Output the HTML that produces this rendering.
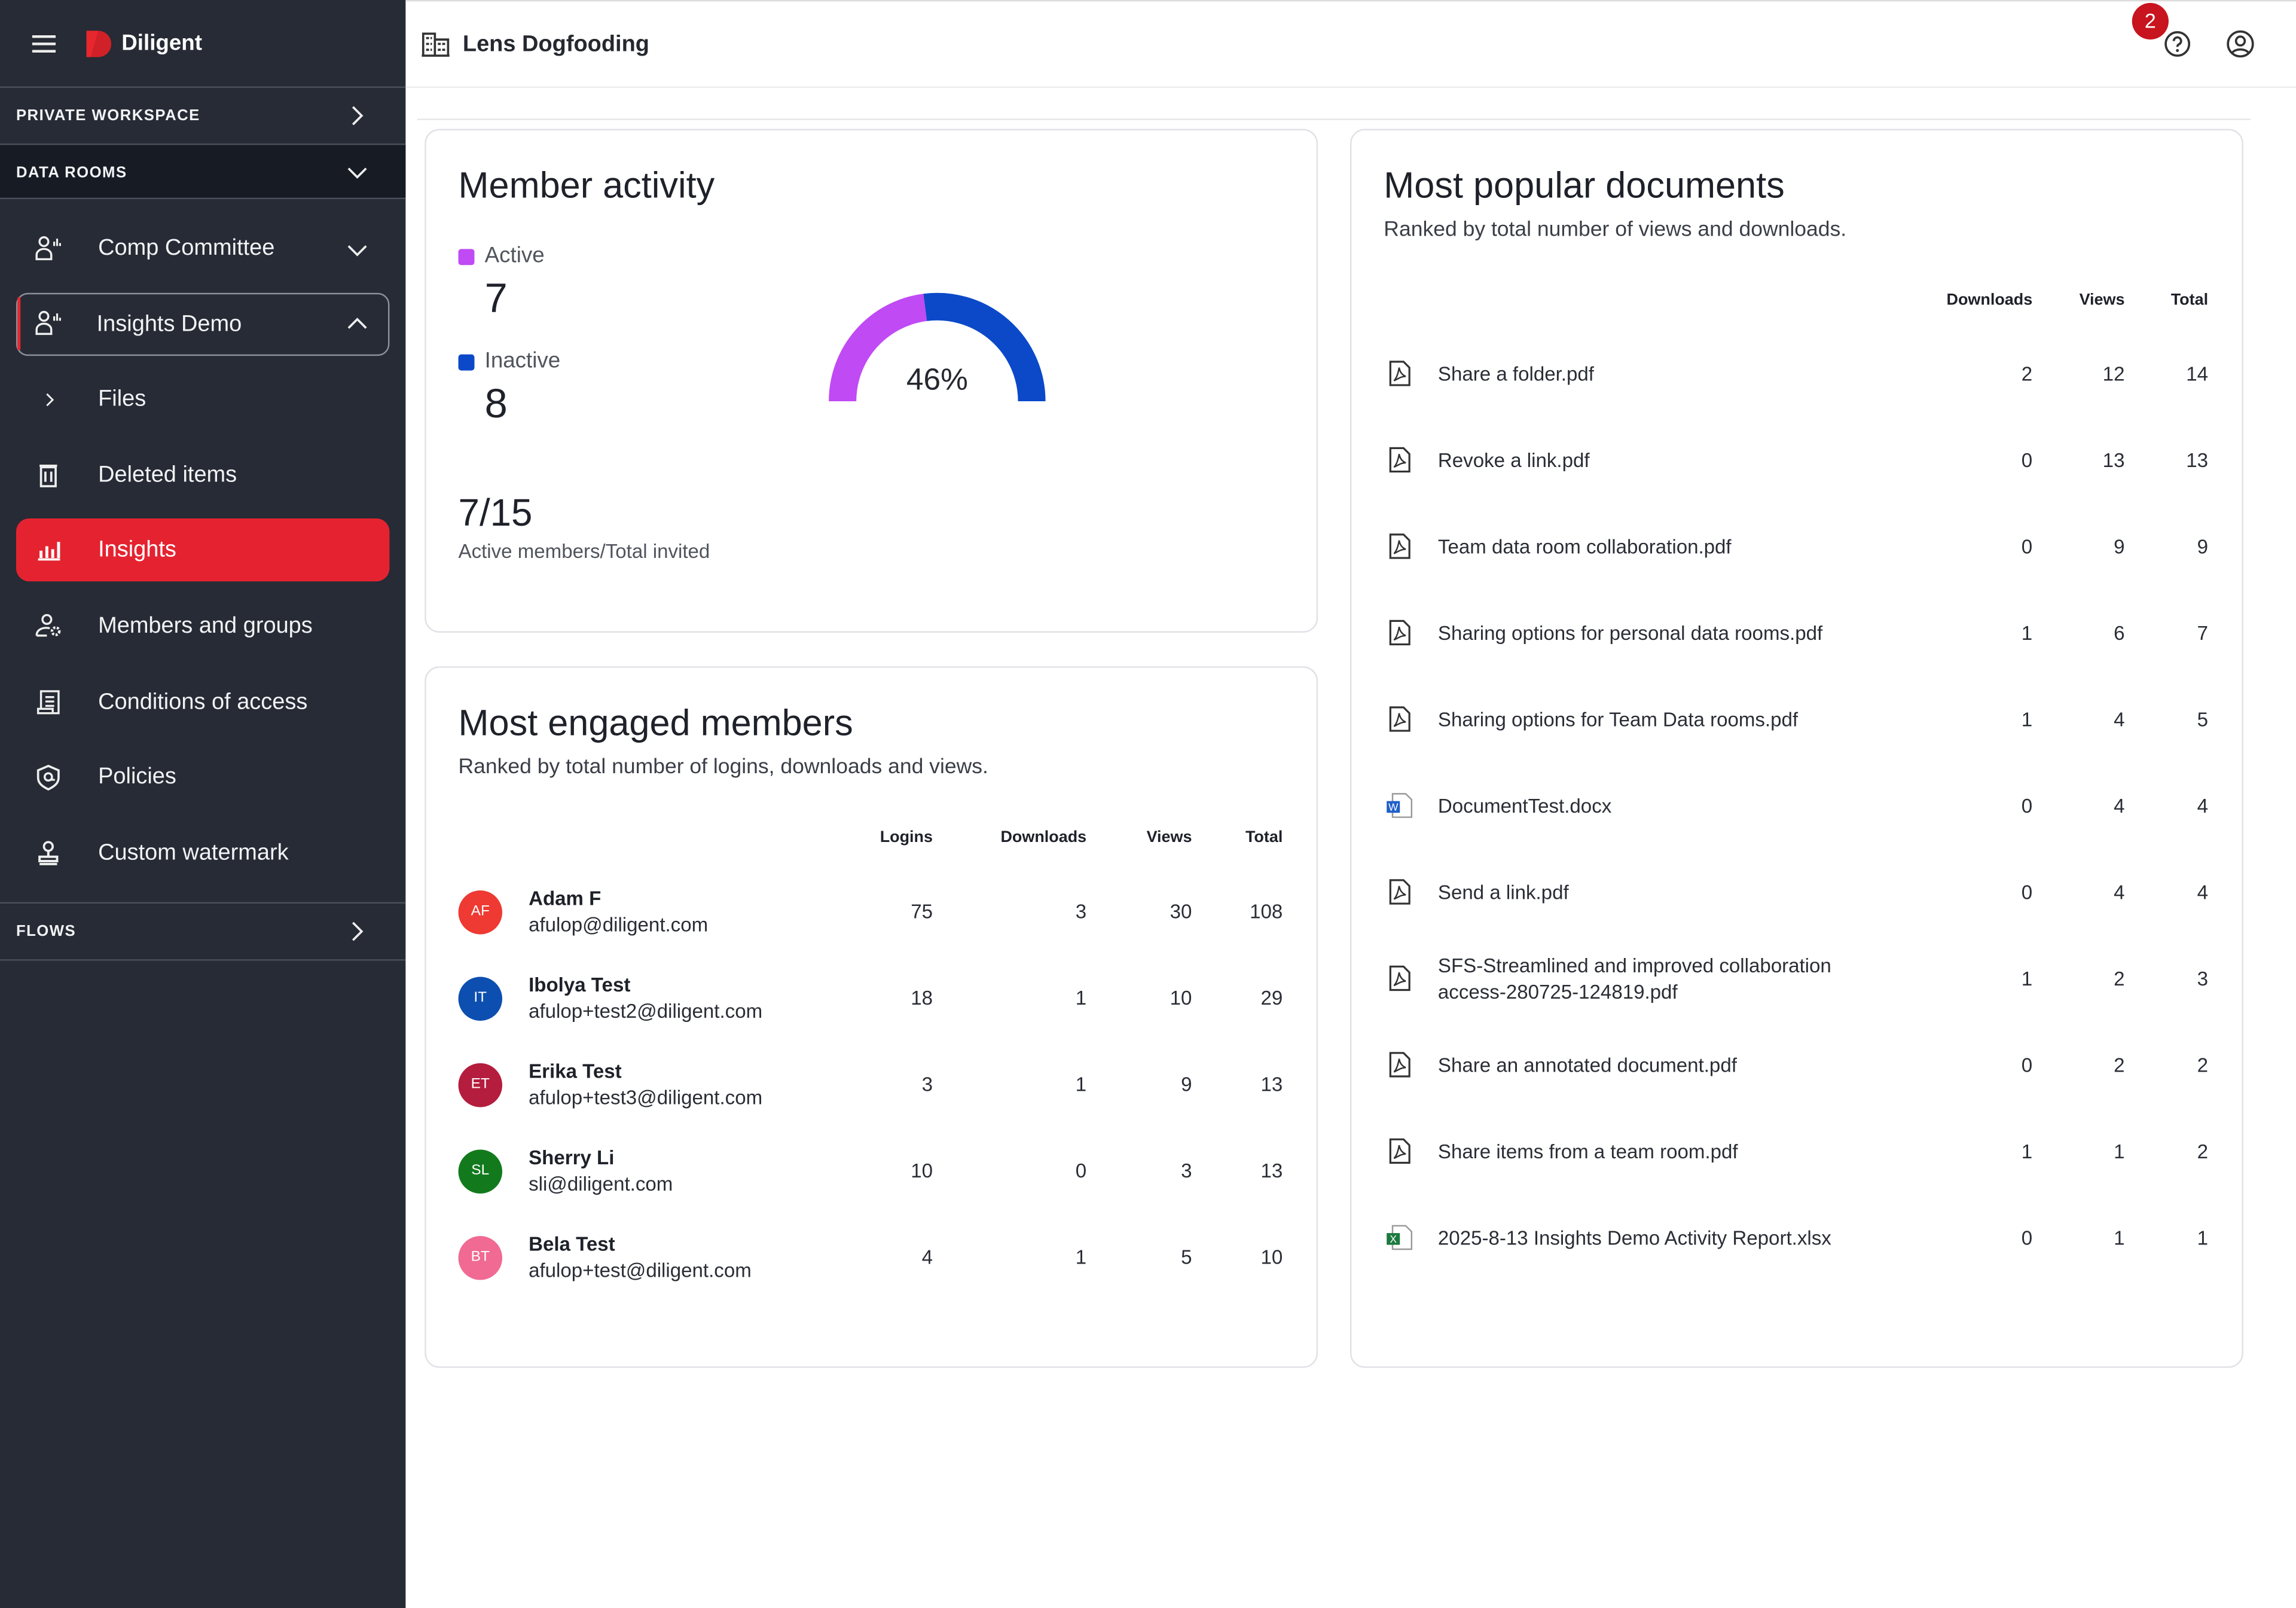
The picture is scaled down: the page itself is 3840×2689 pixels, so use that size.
<!DOCTYPE html>
<html><head><meta charset="utf-8"><style>
*{margin:0;padding:0;box-sizing:border-box}
html,body{width:3840px;height:2688px;overflow:hidden;background:#fff}
#w{position:absolute;left:0;top:0;width:1568px;height:1098px;transform:scale(2.449);transform-origin:0 0;font-family:"Liberation Sans",sans-serif;color:#1e2129}
.a{position:absolute;white-space:nowrap}
.sb{position:absolute;left:0;top:0;width:277px;height:1098px;background:#262b35}
.si{position:absolute;left:67px;color:#f2f3f5;font-size:15.5px;line-height:20px}
.ic{position:absolute;left:23px;width:20px;height:20px}
.hd{position:absolute;left:11px;color:#f2f3f5;font-size:10.5px;font-weight:bold;letter-spacing:.6px;line-height:14px}
.card{position:absolute;border:1px solid #e0e2e6;border-radius:10px;background:#fff}
.t{font-size:25px;color:#1e2129;line-height:30px}
.sub{font-size:14.5px;color:#3a3e47;line-height:18px}
.th{font-size:11px;font-weight:bold;color:#1e2129;line-height:14px}
.r{text-align:right}
.n{font-size:13.5px;color:#2a2d35;line-height:16px}
.av{position:absolute;left:313px;width:30px;height:30px;border-radius:50%;color:#fff;font-size:10px;text-align:center;line-height:30px}
.nm{font-size:13.5px;font-weight:bold;color:#1e2129;line-height:16px}
.em{font-size:13.5px;color:#2a2d35;line-height:16px}
.doc{position:absolute;left:982px;font-size:13.5px;color:#2a2d35;line-height:18px}
</style></head><body><div id="w">
<div class="sb"></div>
<!-- sidebar header -->
<svg class="a" style="left:21px;top:23px" width="18" height="14"><path d="M1 2h16M1 7h16M1 12h16" stroke="#eee" stroke-width="1.8"/></svg>
<svg class="a" style="left:58px;top:19px" width="20" height="22"><path d="M1 2h8a9 9 0 0 1 0 18H1z" fill="#e8262e"/><path d="M9 2a9 9 0 0 1 0 18L4 20z" fill="#b71c22" opacity=".5"/></svg>
<div class="a" style="left:83px;top:20px;color:#fff;font-size:15px;font-weight:bold;line-height:20px">Diligent</div>
<div class="a" style="left:0;top:59px;width:277px;height:1px;background:#4a505c"></div>
<div class="hd" style="top:72px">PRIVATE WORKSPACE</div>
<svg class="a" style="left:239px;top:72px" width="10" height="14"><path d="M2 1l6 6-6 6" stroke="#eee" stroke-width="1.5" fill="none"/></svg>
<div class="a" style="left:0;top:98px;width:277px;height:38px;background:#161b24;border-top:1px solid #4a505c;border-bottom:1px solid #4a505c"></div>
<div class="hd" style="top:111px">DATA ROOMS</div>
<svg class="a" style="left:237px;top:113px" width="14" height="10"><path d="M1 2l6 6 6-6" stroke="#eee" stroke-width="1.5" fill="none"/></svg>
<!-- items -->
<svg class="ic" style="top:160px" viewBox="0 0 20 20"><circle cx="7" cy="5" r="3" stroke="#eee" stroke-width="1.4" fill="none"/><path d="M2 17v-3a5 4 0 0 1 10 0v3z" stroke="#eee" stroke-width="1.4" fill="none"/><path d="M14 5v3M16 3v5M18 6v2" stroke="#eee" stroke-width="1.3"/></svg>
<div class="si" style="top:160px">Comp Committee</div>
<svg class="a" style="left:237px;top:166px" width="14" height="10"><path d="M1 2l6 6 6-6" stroke="#eee" stroke-width="1.5" fill="none"/></svg>
<div class="a" style="left:11px;top:200px;width:255px;height:43px;border:1px solid #8a909c;border-radius:8px"></div>
<div class="a" style="left:12px;top:203px;width:2px;height:36px;background:#e8262e"></div>
<svg class="ic" style="top:211px" viewBox="0 0 20 20"><circle cx="7" cy="5" r="3" stroke="#eee" stroke-width="1.4" fill="none"/><path d="M2 17v-3a5 4 0 0 1 10 0v3z" stroke="#eee" stroke-width="1.4" fill="none"/><path d="M14 5v3M16 3v5M18 6v2" stroke="#eee" stroke-width="1.3"/></svg>
<div class="si" style="top:212px;left:66px">Insights Demo</div>
<svg class="a" style="left:237px;top:216px" width="14" height="10"><path d="M1 8l6-6 6 6" stroke="#eee" stroke-width="1.5" fill="none"/></svg>
<svg class="a" style="left:30px;top:268px" width="8" height="10"><path d="M2 1l4 4-4 4" stroke="#eee" stroke-width="1.2" fill="none"/></svg>
<div class="si" style="top:263px">Files</div>
<svg class="ic" style="top:315px" viewBox="0 0 20 20"><path d="M4 3h12M5 4h10v13H5zM8 7v7M12 7v7" stroke="#eee" stroke-width="1.5" fill="none"/></svg>
<div class="si" style="top:315px">Deleted items</div>
<div class="a" style="left:11px;top:354px;width:255px;height:43px;background:#e52330;border-radius:9px"></div>
<svg class="ic" style="top:366px" viewBox="0 0 20 20"><path d="M3 16h15" stroke="#fff" stroke-width="1.5"/><path d="M4 10h2v5H4zM8 7h2v8H8zM12 9h2v6h-2zM16 4h2v11h-2z" fill="#fff"/></svg>
<div class="si" style="top:366px;color:#fff">Insights</div>
<svg class="ic" style="top:418px" viewBox="0 0 20 20"><circle cx="9" cy="5" r="3" stroke="#eee" stroke-width="1.4" fill="none"/><path d="M2 16c0-4 4-6 9-5M2 16h7" stroke="#eee" stroke-width="1.4" fill="none"/><circle cx="15" cy="13" r="2.5" stroke="#eee" stroke-width="1.8" fill="none" stroke-dasharray="1.5 1"/></svg>
<div class="si" style="top:418px">Members and groups</div>
<svg class="ic" style="top:470px" viewBox="0 0 20 20"><path d="M5 14V2h12v15H3v-3h10v3M8 6h6M8 9h6M8 12h6" stroke="#eee" stroke-width="1.4" fill="none"/></svg>
<div class="si" style="top:470px">Conditions of access</div>
<svg class="ic" style="top:521px" viewBox="0 0 20 20"><path d="M10 2l7 3v5c0 4-3 6-7 8-4-2-7-4-7-8V5z" stroke="#eee" stroke-width="1.5" fill="none"/><circle cx="10" cy="9.5" r="2.5" stroke="#eee" stroke-width="1.4" fill="none"/><path d="M12.5 9.5v2h2" stroke="#eee" stroke-width="1.3" fill="none"/></svg>
<div class="si" style="top:521px">Policies</div>
<svg class="ic" style="top:573px" viewBox="0 0 20 20"><circle cx="10" cy="5" r="3" stroke="#eee" stroke-width="1.5" fill="none"/><path d="M10 8v4M4 12h12v3H4zM4 17h12" stroke="#eee" stroke-width="1.6" fill="none"/></svg>
<div class="si" style="top:573px">Custom watermark</div>
<div class="a" style="left:0;top:616px;width:277px;height:1px;background:#4a505c"></div>
<div class="hd" style="top:629px">FLOWS</div>
<svg class="a" style="left:239px;top:629px" width="10" height="14"><path d="M2 1l6 6-6 6" stroke="#eee" stroke-width="1.5" fill="none"/></svg>
<div class="a" style="left:0;top:655px;width:277px;height:1px;background:#4a505c"></div>

<!-- top bar -->
<div class="a" style="left:277px;top:0;width:1291px;height:1px;background:#ddd"></div>
<svg class="a" style="left:288px;top:22px" width="19" height="17" viewBox="0 0 19 17"><path d="M1 16V1h8v15M9 5h9v11M0 16h19" stroke="#333" stroke-width="1.5" fill="none"/><path d="M3 4h2M6 4h1M3 8h2M6 8h1M3 12h2M6 12h1M11 8h2M14 8h2M11 12h2M14 12h2" stroke="#333" stroke-width="1.5"/></svg>
<div class="a" style="left:316px;top:21px;font-size:15.5px;font-weight:bold;color:#25282f;line-height:20px">Lens Dogfooding</div>
<svg class="a" style="left:1477px;top:20px" width="20" height="20"><circle cx="10" cy="10" r="8" stroke="#333" stroke-width="1.5" fill="none"/><path d="M7.5 8a2.5 2.5 0 1 1 3.5 2.3c-.8.4-1 .9-1 1.7" stroke="#333" stroke-width="1.5" fill="none"/><circle cx="10" cy="14.5" r="1" fill="#333"/></svg>
<div class="a" style="left:1456px;top:2px;width:25px;height:25px;border-radius:50%;background:#c8141e;color:#fff;font-size:14px;text-align:center;line-height:25px">2</div>
<svg class="a" style="left:1520px;top:20px" width="20" height="20"><circle cx="10" cy="10" r="8.5" stroke="#333" stroke-width="1.5" fill="none"/><circle cx="10" cy="8" r="3" stroke="#333" stroke-width="1.5" fill="none"/><path d="M4.5 16c2-3 9-3 11 0" stroke="#333" stroke-width="1.5" fill="none"/></svg>
<div class="a" style="left:277px;top:59px;width:1291px;height:1px;background:#ececec"></div>
<div class="a" style="left:285px;top:81px;width:1252px;height:1px;background:#e6e6e6"></div>

<!-- card 1 -->
<div class="card" style="left:290px;top:88px;width:610px;height:344px"></div>
<div class="a t" style="left:313px;top:112px">Member activity</div>
<div class="a" style="left:313px;top:170px;width:11px;height:11px;background:#c04af4;border-radius:2px"></div>
<div class="a" style="left:331px;top:166px;font-size:15px;color:#50545c;line-height:18px">Active</div>
<div class="a" style="left:331px;top:188px;font-size:28px;color:#1e2129;line-height:32px">7</div>
<div class="a" style="left:313px;top:242px;width:11px;height:11px;background:#0b49c9;border-radius:2px"></div>
<div class="a" style="left:331px;top:238px;font-size:15px;color:#50545c;line-height:18px">Inactive</div>
<div class="a" style="left:331px;top:260px;font-size:28px;color:#1e2129;line-height:32px">8</div>
<svg class="a" style="left:560px;top:195px" width="160" height="85" viewBox="560 195 160 85"><path d="M575.4 274A64.6 64.6 0 0 1 631.8 209.9" stroke="#c04af4" stroke-width="18.8" fill="none"/><path d="M631.8 209.9A64.6 64.6 0 0 1 704.6 274" stroke="#0b49c9" stroke-width="18.8" fill="none"/></svg>
<div class="a" style="left:600px;top:248px;width:80px;text-align:center;font-size:21px;color:#25282f;line-height:24px">46%</div>
<div class="a" style="left:313px;top:335px;font-size:26px;color:#1e2129;line-height:30px">7/15</div>
<div class="a" style="left:313px;top:369px;font-size:13.5px;color:#50545c;line-height:16px">Active members/Total invited</div>

<!-- card 2 -->
<div class="card" style="left:290px;top:455px;width:610px;height:479px"></div>
<div class="a t" style="left:313px;top:479px">Most engaged members</div>
<div class="a sub" style="left:313px;top:515px">Ranked by total number of logins, downloads and views.</div>
<div class="a th r" style="left:537px;top:565px;width:100px">Logins</div>
<div class="a th r" style="left:642px;top:565px;width:100px">Downloads</div>
<div class="a th r" style="left:714px;top:565px;width:100px">Views</div>
<div class="a th r" style="left:776px;top:565px;width:100px">Total</div>

<div class="av" style="top:608px;background:#ee3a32">AF</div>
<div class="a nm" style="left:361px;top:606px">Adam F</div><div class="a em" style="left:361px;top:624px">afulop@diligent.com</div>
<div class="a n r" style="left:537px;top:615px;width:100px">75</div><div class="a n r" style="left:642px;top:615px;width:100px">3</div><div class="a n r" style="left:714px;top:615px;width:100px">30</div><div class="a n r" style="left:776px;top:615px;width:100px">108</div>

<div class="av" style="top:667px;background:#0d4fb0">IT</div>
<div class="a nm" style="left:361px;top:665px">Ibolya Test</div><div class="a em" style="left:361px;top:683px">afulop+test2@diligent.com</div>
<div class="a n r" style="left:537px;top:674px;width:100px">18</div><div class="a n r" style="left:642px;top:674px;width:100px">1</div><div class="a n r" style="left:714px;top:674px;width:100px">10</div><div class="a n r" style="left:776px;top:674px;width:100px">29</div>

<div class="av" style="top:726px;background:#b41d3d">ET</div>
<div class="a nm" style="left:361px;top:724px">Erika Test</div><div class="a em" style="left:361px;top:742px">afulop+test3@diligent.com</div>
<div class="a n r" style="left:537px;top:733px;width:100px">3</div><div class="a n r" style="left:642px;top:733px;width:100px">1</div><div class="a n r" style="left:714px;top:733px;width:100px">9</div><div class="a n r" style="left:776px;top:733px;width:100px">13</div>

<div class="av" style="top:785px;background:#127a1c">SL</div>
<div class="a nm" style="left:361px;top:783px">Sherry Li</div><div class="a em" style="left:361px;top:801px">sli@diligent.com</div>
<div class="a n r" style="left:537px;top:792px;width:100px">10</div><div class="a n r" style="left:642px;top:792px;width:100px">0</div><div class="a n r" style="left:714px;top:792px;width:100px">3</div><div class="a n r" style="left:776px;top:792px;width:100px">13</div>

<div class="av" style="top:844px;background:#f06a93">BT</div>
<div class="a nm" style="left:361px;top:842px">Bela Test</div><div class="a em" style="left:361px;top:860px">afulop+test@diligent.com</div>
<div class="a n r" style="left:537px;top:851px;width:100px">4</div><div class="a n r" style="left:642px;top:851px;width:100px">1</div><div class="a n r" style="left:714px;top:851px;width:100px">5</div><div class="a n r" style="left:776px;top:851px;width:100px">10</div>

<!-- card 3 -->
<div class="card" style="left:922px;top:88px;width:610px;height:846px"></div>
<div class="a t" style="left:945px;top:112px">Most popular documents</div>
<div class="a sub" style="left:945px;top:148px">Ranked by total number of views and downloads.</div>
<div class="a th r" style="left:1288px;top:198px;width:100px">Downloads</div>
<div class="a th r" style="left:1351px;top:198px;width:100px">Views</div>
<div class="a th r" style="left:1408px;top:198px;width:100px">Total</div>
<svg width="0" height="0" style="position:absolute"><defs>
<symbol id="pdf" viewBox="0 0 16 18"><path d="M1.5 1h9l4 4v12h-13z" stroke="#333" stroke-width="1.3" fill="none"/><path d="M4 14c2-2 3-6 3.5-9 .5 3 2 5 4.5 6-3 0-5 1.5-8 3z" stroke="#333" stroke-width="1" fill="none"/></symbol>
</defs></svg>
<div id="docs"></div>
<!-- rows -->
<svg class="a" style="left:948px;top:246px" width="16" height="18"><use href="#pdf"/></svg>
<div class="doc" style="top:247px">Share a folder.pdf</div>
<div class="a n r" style="left:1288px;top:248px;width:100px">2</div><div class="a n r" style="left:1351px;top:248px;width:100px">12</div><div class="a n r" style="left:1408px;top:248px;width:100px">14</div>

<svg class="a" style="left:948px;top:305px" width="16" height="18"><use href="#pdf"/></svg>
<div class="doc" style="top:306px">Revoke a link.pdf</div>
<div class="a n r" style="left:1288px;top:307px;width:100px">0</div><div class="a n r" style="left:1351px;top:307px;width:100px">13</div><div class="a n r" style="left:1408px;top:307px;width:100px">13</div>

<svg class="a" style="left:948px;top:364px" width="16" height="18"><use href="#pdf"/></svg>
<div class="doc" style="top:365px">Team data room collaboration.pdf</div>
<div class="a n r" style="left:1288px;top:366px;width:100px">0</div><div class="a n r" style="left:1351px;top:366px;width:100px">9</div><div class="a n r" style="left:1408px;top:366px;width:100px">9</div>

<svg class="a" style="left:948px;top:423px" width="16" height="18"><use href="#pdf"/></svg>
<div class="doc" style="top:424px">Sharing options for personal data rooms.pdf</div>
<div class="a n r" style="left:1288px;top:425px;width:100px">1</div><div class="a n r" style="left:1351px;top:425px;width:100px">6</div><div class="a n r" style="left:1408px;top:425px;width:100px">7</div>

<svg class="a" style="left:948px;top:482px" width="16" height="18"><use href="#pdf"/></svg>
<div class="doc" style="top:483px">Sharing options for Team Data rooms.pdf</div>
<div class="a n r" style="left:1288px;top:484px;width:100px">1</div><div class="a n r" style="left:1351px;top:484px;width:100px">4</div><div class="a n r" style="left:1408px;top:484px;width:100px">5</div>

<svg class="a" style="left:946px;top:541px" width="20" height="18"><path d="M5 1h9l4 4v12H5z" stroke="#999" stroke-width="1" fill="#fff"/><rect x="1" y="6" width="9" height="8" fill="#1f5fc9"/><text x="5.5" y="12.5" font-size="7" fill="#fff" text-anchor="middle" font-family="Liberation Sans">W</text></svg>
<div class="doc" style="top:542px">DocumentTest.docx</div>
<div class="a n r" style="left:1288px;top:543px;width:100px">0</div><div class="a n r" style="left:1351px;top:543px;width:100px">4</div><div class="a n r" style="left:1408px;top:543px;width:100px">4</div>

<svg class="a" style="left:948px;top:600px" width="16" height="18"><use href="#pdf"/></svg>
<div class="doc" style="top:601px">Send a link.pdf</div>
<div class="a n r" style="left:1288px;top:602px;width:100px">0</div><div class="a n r" style="left:1351px;top:602px;width:100px">4</div><div class="a n r" style="left:1408px;top:602px;width:100px">4</div>

<svg class="a" style="left:948px;top:659px" width="16" height="18"><use href="#pdf"/></svg>
<div class="doc" style="top:651px">SFS-Streamlined and improved collaboration<br>access-280725-124819.pdf</div>
<div class="a n r" style="left:1288px;top:661px;width:100px">1</div><div class="a n r" style="left:1351px;top:661px;width:100px">2</div><div class="a n r" style="left:1408px;top:661px;width:100px">3</div>

<svg class="a" style="left:948px;top:718px" width="16" height="18"><use href="#pdf"/></svg>
<div class="doc" style="top:719px">Share an annotated document.pdf</div>
<div class="a n r" style="left:1288px;top:720px;width:100px">0</div><div class="a n r" style="left:1351px;top:720px;width:100px">2</div><div class="a n r" style="left:1408px;top:720px;width:100px">2</div>

<svg class="a" style="left:948px;top:777px" width="16" height="18"><use href="#pdf"/></svg>
<div class="doc" style="top:778px">Share items from a team room.pdf</div>
<div class="a n r" style="left:1288px;top:779px;width:100px">1</div><div class="a n r" style="left:1351px;top:779px;width:100px">1</div><div class="a n r" style="left:1408px;top:779px;width:100px">2</div>

<svg class="a" style="left:946px;top:836px" width="20" height="18"><path d="M5 1h9l4 4v12H5z" stroke="#999" stroke-width="1" fill="#fff"/><rect x="1" y="6" width="9" height="8" fill="#1d7a3e"/><text x="5.5" y="12.5" font-size="7" fill="#fff" text-anchor="middle" font-family="Liberation Sans">X</text></svg>
<div class="doc" style="top:837px">2025-8-13 Insights Demo Activity Report.xlsx</div>
<div class="a n r" style="left:1288px;top:838px;width:100px">0</div><div class="a n r" style="left:1351px;top:838px;width:100px">1</div><div class="a n r" style="left:1408px;top:838px;width:100px">1</div>
</div></body></html>
